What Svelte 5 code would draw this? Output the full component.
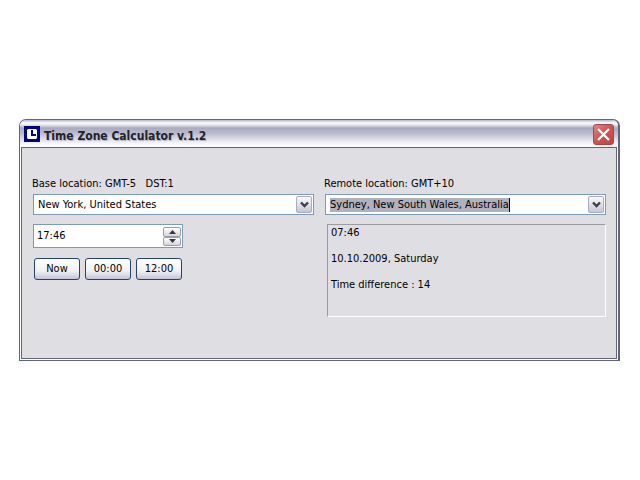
<script lang="ts">
  const cities = [
    "New York, United States",
    "London, United Kingdom",
    "Sydney, New South Wales, Australia",
  ];

  let baseCity = $state(cities[0]);
  let remoteCity = $state(cities[2]);
  let baseTime = $state("17:46");

  function toMinutes(value: string) {
    const [hours, minutes] = value.split(":").map(Number);
    return (hours || 0) * 60 + (minutes || 0);
  }

  function format(total: number) {
    const wrapped = (total + 1440) % 1440;
    const hours = Math.floor(wrapped / 60);
    return `${String(hours).padStart(2, "0")}:${String(wrapped % 60).padStart(2, "0")}`;
  }

  function step(amount: number) {
    baseTime = format(toMinutes(baseTime) + amount);
  }

  function setNow() {
    const now = new Date();
    baseTime = format(now.getHours() * 60 + now.getMinutes());
  }

  function nextCity() {
    remoteCity = cities[(cities.indexOf(remoteCity) + 1) % cities.length];
  }

  const difference = 14;
  let remoteTime = $derived(format(toMinutes(baseTime) + difference * 60));
</script>

{#snippet chevron()}
  <svg class="chevron" viewBox="0 0 9 7" width="9" height="7" aria-hidden="true">
    <path d="M1 1.5 L4.5 5 L8 1.5" fill="none" stroke="#3b3d48" stroke-width="2.4" />
  </svg>
{/snippet}

<main class="window">
  <header class="titlebar">
    <svg class="logo" viewBox="0 0 16 16" width="16" height="16" aria-hidden="true">
      <rect width="16" height="16" fill="#05057a" />
      <path d="M4 3h8l1 1v8l-1 1H4l-1-1V4z" fill="#fff" />
      <path d="M8 4v5h4" fill="none" stroke="#05057a" stroke-width="2" />
    </svg>
    <h1>Time Zone Calculator v.1.2</h1>
    <button class="close" type="button" aria-label="Close">
      <svg viewBox="0 0 13 13" width="13" height="13" aria-hidden="true">
        <path d="M1 1l11 11M12 1L1 12" stroke="#fff" stroke-width="2.2" />
      </svg>
    </button>
  </header>

  <div class="body">
    <section class="column">
      <label class="caption" for="base">Base location: GMT-5 &nbsp; DST:1</label>
      <div class="combo">
        <select id="base" bind:value={baseCity}>
          {#each cities as city}
            <option>{city}</option>
          {/each}
        </select>
        <span class="drop">{@render chevron()}</span>
      </div>

      <div class="spinner">
        <input aria-label="Base time" bind:value={baseTime} />
        <div class="arrows">
          <button type="button" aria-label="Later" onclick={() => step(1)}>
            <svg viewBox="0 0 7 4" width="7" height="4"><path d="M0 4L3.5 0L7 4z" fill="#33353f" /></svg>
          </button>
          <button type="button" aria-label="Earlier" onclick={() => step(-1)}>
            <svg viewBox="0 0 7 4" width="7" height="4"><path d="M0 0h7L3.5 4z" fill="#33353f" /></svg>
          </button>
        </div>
      </div>

      <div class="presets">
        <button type="button" onclick={setNow}>Now</button>
        <button type="button" onclick={() => (baseTime = "00:00")}>00:00</button>
        <button type="button" onclick={() => (baseTime = "12:00")}>12:00</button>
      </div>
    </section>

    <section class="column">
      <label class="caption" for="remote">Remote location: GMT+10</label>
      <div class="combo editable">
        <input id="remote" bind:value={remoteCity} />
        <button class="drop" type="button" aria-label="Next location" onclick={nextCity}>
          {@render chevron()}
        </button>
      </div>

      <div class="result">
        <p>{remoteTime}</p>
        <p>10.10.2009, Saturday</p>
        <p>Time difference : {difference}</p>
      </div>
    </section>
  </div>
</main>

<style>
  :global(body) {
    margin: 0;
    background: #fff;
  }

  .window,
  button,
  input,
  select {
    box-sizing: border-box;
    font-family: Tahoma, "DejaVu Sans Condensed", "DejaVu Sans", sans-serif;
    font-size: 11px;
    color: #000;
  }

  .window {
    margin: 119px 20px 0 19px;
    border: 1px solid #62647a;
    border-right-width: 2px;
    border-radius: 7px 7px 0 0;
    background: #fff;
    overflow: hidden;
  }

  .titlebar {
    display: flex;
    align-items: center;
    gap: 4px;
    height: 27px;
    padding: 0 4px 0 4px;
    background: linear-gradient(
      #b4b5c7 0,
      #fff 3px,
      #e4e4ec 5px,
      #a9aac1 8px,
      #b9bacb 13px,
      #f4f4f8 23px,
      #fff 27px
    );
  }

  h1 {
    flex: 1;
    margin: 0;
    padding-top: 4px;
    font-size: 12px;
    line-height: 16px;
    font-weight: bold;
    color: #22222c;
    text-shadow: 1px 1px 1px #b0b1c2;
  }

  .close {
    display: grid;
    place-items: center;
    width: 21px;
    height: 21px;
    margin-top: 2px;
    padding: 0;
    border: 1px solid #a3474b;
    border-radius: 3px;
    background: linear-gradient(135deg, #df8583, #cc5553 50%, #b94747);
  }

  .body {
    display: grid;
    grid-template-columns: 1fr 1fr;
    gap: 11px;
    min-height: 212px;
    margin: 0 1px 1px;
    padding: 29px 10px 0 11px;
    box-sizing: border-box;
    border: 1px solid #62647a;
    background: #dfdee3;
  }

  .column {
    min-width: 0;
  }

  .caption {
    display: block;
    margin-left: -1px;
    line-height: 14px;
    margin-bottom: 3px;
    white-space: pre;
  }

  .combo {
    display: grid;
    grid-template-columns: 1fr 18px;
    height: 21px;
    box-sizing: border-box;
    border: 1px solid #7d9bb5;
    background: #fff;
  }

  .combo select {
    grid-area: 1 / 1 / 2 / 3;
    appearance: none;
    padding: 0 18px 0 4px;
    border: 0;
    background: transparent;
    outline: none;
  }

  .drop {
    grid-area: 1 / 2;
    display: grid;
    place-items: center;
    box-sizing: border-box;
    margin: 1px;
    padding: 0;
    border: 1px solid #a9acbd;
    border-radius: 2px;
    background: linear-gradient(#fafafc, #c4c6d4);
    pointer-events: none;
  }

  button.drop {
    pointer-events: auto;
  }

  .editable input {
    justify-self: start;
    align-self: center;
    field-sizing: content;
    height: 14px;
    margin-left: 4px;
    padding: 0;
    border: 0;
    border-right: 1px solid #000;
    background: #b0b1bd;
    outline: none;
  }

  .spinner {
    display: flex;
    width: 150px;
    height: 24px;
    margin-top: 9px;
    box-sizing: border-box;
    border: 1px solid #7d9bb5;
    background: #fff;
  }

  .spinner input {
    flex: 1;
    min-width: 0;
    padding: 0 3px 2px;
    border: 0;
    background: transparent;
    outline: none;
  }

  .arrows {
    display: grid;
    grid-template-rows: 1fr 1fr;
    width: 18px;
    padding: 2px 1px 1px;
  }

  .arrows button {
    display: grid;
    place-items: center;
    min-height: 0;
    padding: 0;
    border: 1px solid #9a9caa;
    border-radius: 2px;
    background: linear-gradient(#fff, #d3d4de);
  }

  .presets {
    display: flex;
    gap: 5px;
    margin: 10px 0 0 1px;
  }

  .presets button {
    width: 46px;
    height: 22px;
    padding: 0;
    border: 1px solid #24456b;
    border-radius: 3px;
    background: linear-gradient(#fff, #f1f1f6 60%, #c3c4d6);
    line-height: 20px;
  }

  .result {
    min-height: 93px;
    margin: 9px 0 0 2px;
    padding: 1px 3px;
    box-sizing: border-box;
    border: 1px solid;
    border-color: #9b9ba1 #fff #fff #9b9ba1;
  }

  .result p {
    margin: 0 0 13px;
    line-height: 13px;
  }
</style>
